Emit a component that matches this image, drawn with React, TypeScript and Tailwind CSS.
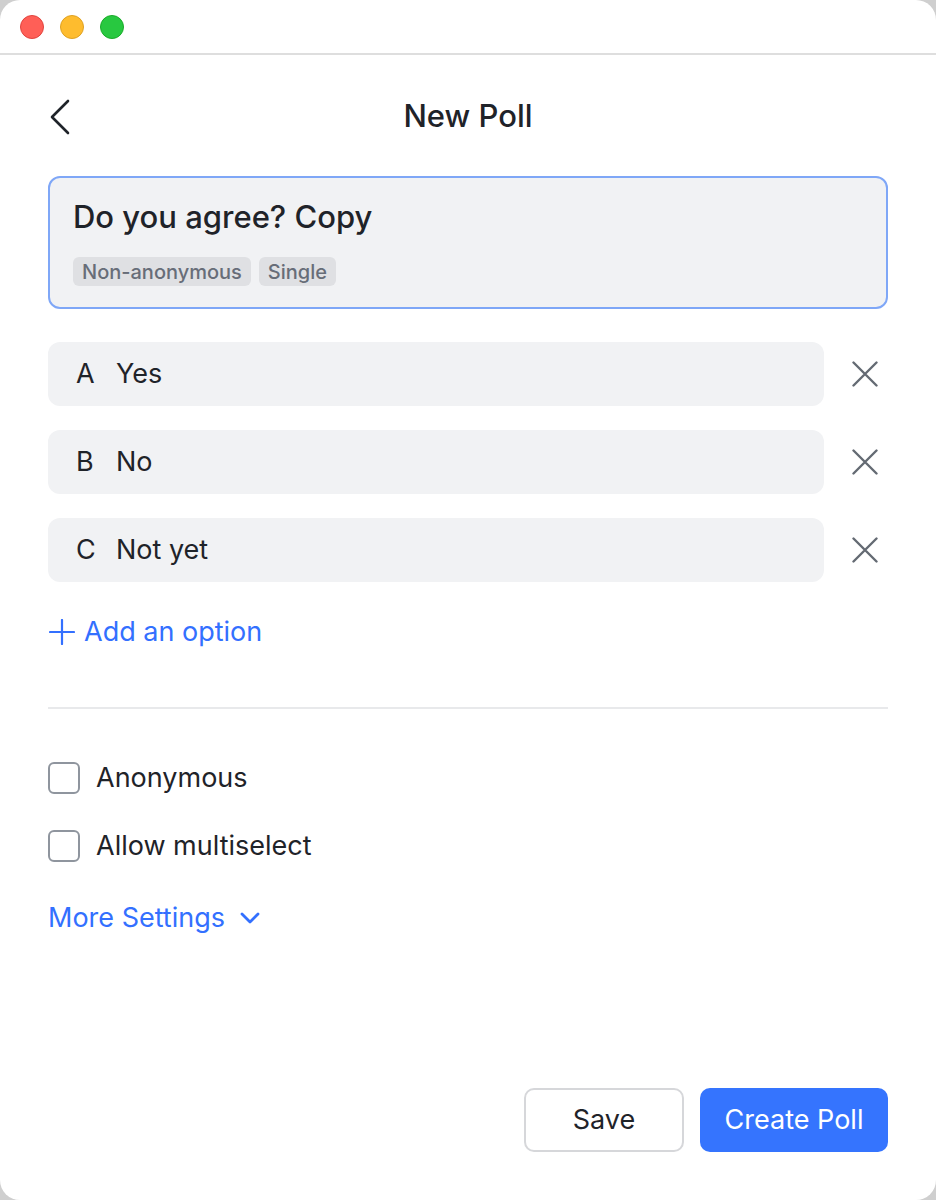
const options = [
  { key: "A", label: "Yes" },
  { key: "B", label: "No" },
  { key: "C", label: "Not yet" },
];

const CloseIcon = () => (
  <svg width="26" height="26" viewBox="0 0 26 26" fill="none" className="mr-[10px] text-[#646a73]">
    <path d="M1.5 1.5 L24.5 24.5 M24.5 1.5 L1.5 24.5" stroke="currentColor" strokeWidth="2.4" strokeLinecap="round" />
  </svg>
);

const App: React.FC = () => {
  return (
    <div className="h-[1200px] w-[936px] bg-[#cfcfcf] font-['Inter',sans-serif] text-[#1f2329]">
      <div className="flex h-full flex-col overflow-hidden rounded-[20px] bg-white">
        {/* title bar */}
        <div className="flex h-[55px] shrink-0 items-center gap-4 border-b-2 border-[#dedede] pl-5">
          <span className="h-6 w-6 rounded-full border border-[#e0443e] bg-[#ff5f57]" />
          <span className="h-6 w-6 rounded-full border border-[#dea123] bg-[#febc2e]" />
          <span className="h-6 w-6 rounded-full border border-[#1aab29] bg-[#28c840]" />
        </div>

        <main className="flex flex-1 flex-col px-12">
          <header className="relative flex h-[121px] items-center justify-center">
            <button className="absolute left-[1px] top-[44px] text-[#1f2329]">
              <svg width="22" height="36" viewBox="0 0 22 36" fill="none">
                <path d="M19 2 L3 18 L19 34" stroke="currentColor" strokeWidth="2.6" strokeLinecap="round" strokeLinejoin="round" />
              </svg>
            </button>
            <h1 className="text-[31px] font-medium leading-[40px]">New Poll</h1>
          </header>

          <div className="flex h-[133px] flex-col rounded-xl border-2 border-[#7fa7f7] bg-[#f1f2f4] px-[23px] pt-[20px]">
            <p className="text-[31px] font-medium leading-[38px]">Do you agree? Copy</p>
            <div className="mt-[21px] flex gap-2">
              <span className="flex h-[29px] items-center rounded-md bg-[#dfe0e3] px-[9px] text-[20px] font-medium text-[#676d78]">
                Non-anonymous
              </span>
              <span className="flex h-[29px] items-center rounded-md bg-[#dfe0e3] px-[9px] text-[20px] font-medium text-[#676d78]">
                Single
              </span>
            </div>
          </div>

          <div className="mt-[33px] flex flex-col gap-6">
            {options.map((o) => (
              <div key={o.key} className="flex items-center gap-[28px]">
                <div className="flex h-16 flex-1 items-center rounded-xl bg-[#f1f2f4] px-7 text-[27px]">
                  <span className="w-10">{o.key}</span>
                  <span>{o.label}</span>
                </div>
                <CloseIcon />
              </div>
            ))}
          </div>

          <button className="mt-[30px] flex h-10 items-center gap-[9px] self-start text-[27px] text-[#3370ff]">
            <svg width="26" height="26" viewBox="0 0 26 26" fill="none" className="ml-[1px]">
              <path d="M13 1 V25 M1 13 H25" stroke="currentColor" strokeWidth="2.2" strokeLinecap="round" />
            </svg>
            Add an option
          </button>

          <div className="mt-[55px] h-[2px] bg-[#e8e9eb]" />

          <div className="mt-[49px] flex flex-col gap-7">
            {["Anonymous", "Allow multiselect"].map((t) => (
              <label key={t} className="flex h-10 items-center gap-4 text-[27px]">
                <span className="h-8 w-8 rounded-md border-2 border-[#8f959e] bg-white" />
                {t}
              </label>
            ))}
          </div>

          <button className="mt-8 flex h-10 items-center gap-[15px] self-start text-[27px] text-[#3370ff]">
            More Settings
            <svg width="20" height="12" viewBox="0 0 20 12" fill="none">
              <path d="M2 2 L10 10 L18 2" stroke="currentColor" strokeWidth="2.8" strokeLinecap="round" strokeLinejoin="round" />
            </svg>
          </button>

          <div className="mt-auto mb-[48px] flex justify-end gap-4">
            <button className="h-16 w-40 rounded-[10px] border-2 border-[#d6d7da] bg-white text-[27px]">
              Save
            </button>
            <button className="h-16 w-[188px] rounded-[10px] bg-[#3574fe] text-[27px] text-white">
              Create Poll
            </button>
          </div>
        </main>
      </div>
    </div>
  );
};

export default App;
